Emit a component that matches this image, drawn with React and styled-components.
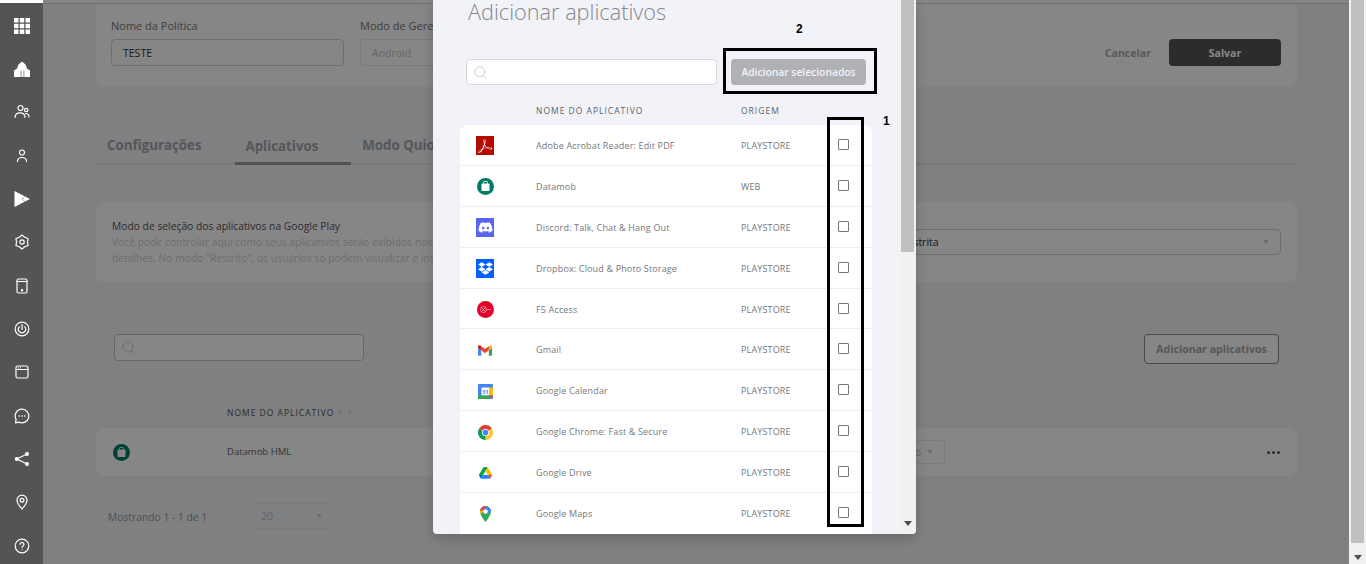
import React from 'react';
import styled, { createGlobalStyle } from 'styled-components';
import { Search, ArrowUp, ArrowDown } from 'lucide-react';
import { FaDiscord, FaDropbox } from 'react-icons/fa';
import { SiAdobeacrobatreader } from 'react-icons/si';

const GlobalStyle = createGlobalStyle`
  html, body {
    margin: 0;
    height: 100%;
    overflow: hidden;
    background: #f1f3f8;
    font-family: 'Open Sans', 'Liberation Sans', sans-serif;
  }
  * {
    box-sizing: border-box;
  }
`;

const Page = styled.div`
  display: flex;
  width: 1366px;
  height: 564px;
  overflow: hidden;
`;

const Sidebar = styled.nav`
  flex: 0 0 43px;
  display: flex;
  flex-direction: column;
  background: #545454;
  border-top: 3px solid #fff;
`;

const SideItem = styled.div`
  flex: 0 0 43.33px;
  display: flex;
  align-items: center;
  justify-content: center;
  color: #fff;
  &:first-child {
    margin-top: 1px;
  }
`;

const Main = styled.main`
  position: relative;
  flex: 1;
  min-width: 0;
  display: flex;
  flex-direction: column;
  overflow: hidden;
  background: #f1f3f8;
`;

const TopBar = styled.div`
  flex: 0 0 4px;
  background: #fff;
  border-bottom: 1px solid #d2d2d2;
`;

const Content = styled.div`
  display: flex;
  flex-direction: column;
  padding: 0 52px 0 53px;
`;

const Card = styled.section`
  display: flex;
  background: #fff;
  border-radius: ${(p) => (p.$flatTop ? '0 0 8px 8px' : '8px')};
`;

const PolicyCard = styled(Card)`
  align-items: flex-end;
  padding: 14px 16px 21px 15px;
`;

const Field = styled.label`
  display: flex;
  flex-direction: column;
  gap: 5px;
  width: ${(p) => p.$width}px;
  margin-right: 16px;
  font-size: 11px;
  line-height: 16px;
  color: #777;
`;

const Input = styled.div`
  height: 27px;
  display: flex;
  align-items: center;
  padding: 0 11px;
  border: 1px solid ${(p) => (p.$disabled ? '#e8e8e8' : '#d4d4d4')};
  border-radius: 4px;
  background: #fff;
  font-size: 10.5px;
  color: ${(p) => (p.$disabled ? '#c4c4c4' : '#333')};
`;

const Actions = styled.div`
  margin-left: auto;
  display: flex;
  align-items: center;
  gap: 18px;
`;

const CancelButton = styled.button`
  border: 0;
  padding: 0;
  background: none;
  font: 700 10.6px 'Open Sans', sans-serif;
  color: #aaa;
`;

const SaveButton = styled.button`
  width: 112px;
  height: 27px;
  border: 0;
  border-radius: 4px;
  background: #555;
  font: 700 10.5px 'Open Sans', sans-serif;
  color: #fff;
`;

const Tabs = styled.div`
  display: flex;
  margin-top: 47px;
  border-bottom: 2px solid #e6e7ea;
`;

const Tab = styled.div`
  padding: ${(p) => (p.$active ? '2px 33px 6px 11px' : '1px 33px 8px 11px')};
  margin-bottom: ${(p) => (p.$active ? '-2px' : '0')};
  border-bottom: ${(p) => (p.$active ? '3px solid #9c9c9c' : '0')};
  font-size: 13.3px;
  font-weight: 700;
  line-height: 20px;
  color: #a4a4a8;
  white-space: nowrap;
`;

const ModeCard = styled(Card)`
  height: 80px;
  margin-top: 37px;
  padding: 16px 16px 0;
  align-items: flex-start;
`;

const ModeText = styled.div`
  width: 778px;
  font-size: 10.3px;
  line-height: 16px;
  white-space: nowrap;
  overflow: hidden;
  color: #d2d2d2;
  strong {
    display: block;
    font-weight: 400;
    color: #555;
  }
`;

const Select = styled.div`
  display: flex;
  align-items: center;
  justify-content: ${(p) => (p.$end ? 'flex-end' : 'space-between')};
  gap: 6px;
  flex: ${(p) => (p.$grow ? '1' : `0 0 ${p.$width}px`)};
  height: ${(p) => p.$height || 26}px;
  margin-top: ${(p) => p.$top || 0}px;
  padding: 0 11px 0 10px;
  border: 1px solid ${(p) => p.$line || '#e8e8e8'};
  border-radius: 4px;
  font-size: 10.5px;
  color: ${(p) => p.$color || '#c0c0c0'};
`;

const Caret = styled.span`
  width: 0;
  height: 0;
  border-left: 3px solid transparent;
  border-right: 3px solid transparent;
  border-top: 4px solid #d0d0d0;
`;

const SearchRow = styled.div`
  display: flex;
  align-items: flex-start;
  justify-content: space-between;
  margin-top: 52px;
  padding: 0 18px;
`;

const SearchBox = styled.div`
  display: flex;
  align-items: center;
  width: ${(p) => p.$width}px;
  height: ${(p) => p.$height}px;
  padding-left: 6px;
  background: #fff;
  border: 1px solid ${(p) => p.$line};
  border-radius: 4px;
  color: ${(p) => p.$icon};
`;

const OutlineButton = styled.button`
  width: 135px;
  height: 30px;
  padding: 0;
  background: #fff;
  border: 1px solid #8c8c8c;
  border-radius: 4px;
  font: 700 10.6px 'Open Sans', sans-serif;
  color: #a4a4a8;
`;

const TableHead = styled.div`
  display: flex;
  align-items: center;
  gap: 5px;
  height: 16px;
  margin-top: 40px;
  margin-bottom: 8px;
  padding-left: 131px;
  font-size: 8.5px;
  letter-spacing: 1px;
  color: #555;
  svg {
    margin-left: -3px;
    color: #c4c4c4;
  }
`;

const AppRow = styled(Card)`
  display: grid;
  grid-template-columns: 114px 573px 145px 1fr auto;
  align-items: center;
  height: 48px;
  padding: 0 17px;
  font-size: 9.5px;
  color: #666;
`;

const AppName = styled.span`
  margin-bottom: 2px;
`;

const Dots = styled.span`
  display: flex;
  gap: 2px;
  i {
    width: 3px;
    height: 3px;
    border-radius: 50%;
    background: #555;
  }
`;

const Footer = styled.div`
  display: flex;
  align-items: center;
  margin-top: 27px;
  padding-left: 12px;
  font-size: 10.3px;
  color: #999;
`;

const FooterLabel = styled.span`
  width: 142px;
  padding-top: 2px;
`;

const Overlay = styled.div`
  position: absolute;
  inset: 0;
  background: rgba(0, 0, 0, 0.475);
`;

const Modal = styled.div`
  position: absolute;
  top: 0;
  left: 390px;
  display: flex;
  width: 483px;
  height: 534px;
  overflow: hidden;
  background: #f1f3f8;
  border-radius: 0 0 4px 4px;
  box-shadow: 0 4px 12px rgba(0, 0, 0, 0.2);
`;

const ModalBody = styled.div`
  position: relative;
  flex: 1;
  display: flex;
  flex-direction: column;
  padding-left: 27px;
`;

const ModalTitle = styled.h2`
  margin: 0 0 1px 8px;
  font-size: 21.7px;
  font-weight: 300;
  line-height: 23px;
  color: #85878d;
`;

const ModalSearchRow = styled.div`
  display: flex;
  gap: 14px;
  margin: 35px 0 0 6px;
`;

const PrimaryButton = styled.button`
  width: 135px;
  height: 26px;
  padding: 0;
  border: 0;
  border-radius: 4px;
  background: #b0b1b5;
  font: 600 10.3px 'Open Sans', sans-serif;
  color: #f1f3f8;
`;

const ListGrid = styled.div`
  display: grid;
  grid-template-columns: 76px 205px 97px 1fr;
  align-items: center;
`;

const ListHead = styled(ListGrid)`
  height: 16px;
  margin-top: 17px;
  margin-bottom: 7px;
  width: 412px;
  font-size: 8.5px;
  letter-spacing: 1px;
  color: #5d5f65;
`;

const List = styled.div`
  width: 412px;
  background: #fff;
  border-radius: 8px 8px 0 0;
`;

const ListRow = styled(ListGrid)`
  height: 40.9px;
  padding-top: 2px;
  border-bottom: 1px solid #eceef2;
  font-size: 9px;
  letter-spacing: 0.15px;
  color: #75777c;
  &:last-child {
    border-bottom: 0;
  }
`;

const RowText = styled.span`
  margin-bottom: 1px;
`;

const IconCell = styled.span`
  display: flex;
  align-items: center;
  justify-content: center;
  width: 18px;
  margin-left: 16px;
`;

const SquareIcon = styled.span`
  display: flex;
  align-items: center;
  justify-content: center;
  width: 18px;
  height: ${(p) => p.$height || 19}px;
  background: ${(p) => p.$bg};
  color: #fff;
`;

const Checkbox = styled.input.attrs({ type: 'checkbox' })`
  appearance: none;
  width: 11px;
  height: 11px;
  margin: 0 0 3px;
  background: #fff;
  border: 1px solid #767676;
  border-radius: 1px;
`;

const Highlight = styled.div`
  position: absolute;
  top: ${(p) => p.$top}px;
  left: ${(p) => p.$left}px;
  width: ${(p) => p.$width}px;
  height: ${(p) => p.$height}px;
  border: 3px solid #000;
`;

const Marker = styled.span`
  position: absolute;
  top: ${(p) => p.$top}px;
  left: ${(p) => p.$left}px;
  font: 700 12px/14px 'Liberation Sans', sans-serif;
  color: #000;
`;

const Scrollbar = styled.div`
  flex: 0 0 17px;
  display: flex;
  flex-direction: column;
  align-items: center;
  background: #f1f1f1;
`;

const Thumb = styled.div`
  width: 13px;
  height: ${(p) => p.$height}px;
  background: #c0c0c0;
`;

const ScrollArrow = styled.span`
  width: 0;
  height: 0;
  margin-top: auto;
  margin-bottom: ${(p) => p.$bottom}px;
  border-left: 4px solid transparent;
  border-right: 4px solid transparent;
  border-top: 5px solid #505050;
`;

const Stroke = ({ children, box = 16 }) => (
  <svg
    width={box}
    height={box}
    viewBox={`0 0 ${box} ${box}`}
    fill="none"
    stroke="currentColor"
    strokeWidth="1.2"
    strokeLinecap="round"
    strokeLinejoin="round"
  >
    {children}
  </svg>
);

const sideIcons = [
  <svg key="grid" width="16" height="16" viewBox="0 0 16 16" fill="#fff">
    {[0, 5.75, 11.5].map((y) =>
      [0, 5.75, 11.5].map((x) => <rect key={`${x}-${y}`} x={x} y={y} width="4.5" height="4.5" />),
    )}
  </svg>,
  <svg key="home" width="16" height="16" viewBox="0 0 16 16">
    <path d="M0 16V9.500L3 7.500L4.500 3.500L8 0.500L11.500 3.500L13 7.500L16 9.500V16z" fill="#fff" />
    <path d="M6.500 9.500h1.200V16H6.500zM9.300 9.500h1.200V16H9.300z" fill="#a8a8a8" />
  </svg>,
  <Stroke key="users">
    <circle cx="6.500" cy="4" r="2.500" />
    <circle cx="12.200" cy="6" r="1.700" />
    <path d="M1 13.500C1 10.500 3 8.800 6 8.800s5 1.700 5 4.700M11.500 9.500c2 0 3.500 1.300 3.500 3.500" />
  </Stroke>,
  <Stroke key="user">
    <circle cx="8" cy="4.500" r="2.500" />
    <path d="M3.500 13.500C3.500 11 5.500 9.500 8 9.500s4.500 1.500 4.500 4" />
  </Stroke>,
  <svg key="play" width="16" height="16" viewBox="0 0 16 16">
    <path d="M0.500 0L16 8 0.500 16z" fill="#fff" />
    <path d="M8 8L11.500 5M8 8L11.500 11" stroke="#8a8a8a" strokeWidth="0.8" />
  </svg>,
  <Stroke key="settings">
    <path d="M8 1L10.750 3.240L14.060 4.500L13.500 8L14.060 11.500L10.750 12.760L8 15L5.250 12.760L1.940 11.500L2.500 8L1.940 4.500L5.250 3.240z" />
    <circle cx="8" cy="8" r="2.200" />
  </Stroke>,
  <Stroke key="tablet">
    <rect x="3" y="1" width="10" height="14" rx="1.500" />
    <path d="M3 3.500h10" />
    <circle cx="8" cy="12.200" r="0.600" fill="#fff" />
  </Stroke>,
  <Stroke key="radial">
    <circle cx="8" cy="8" r="6.800" />
    <path d="M5.300 5.800a3.600 3.600 0 1 0 5.400 0M8 3.500V8.500" />
  </Stroke>,
  <Stroke key="window">
    <rect x="2" y="2" width="12" height="12" rx="1.800" />
    <path d="M2 5.500h12M4.500 3.800h0M6.500 3.800h0" />
  </Stroke>,
  <Stroke key="chat">
    <path d="M8 1.200a6.800 6.800 0 1 1-3 12.900L1.500 14.800l.6-3.400A6.800 6.800 0 0 1 8 1.200z" />
    <path d="M5.200 8h.1M8 8h.1M10.800 8h.1" strokeWidth="1.600" />
  </Stroke>,
  <Stroke key="share">
    <circle cx="2.800" cy="8" r="1.400" fill="#fff" />
    <circle cx="13" cy="3" r="1.400" fill="#fff" />
    <circle cx="13" cy="13" r="1.400" fill="#fff" />
    <path d="M4.300 7.200l7.200-3.500M4.300 8.800l7.200 3.500" />
  </Stroke>,
  <Stroke key="pin">
    <path d="M8 15C5.500 12 3 9.500 3 6.200a5 5 0 0 1 10 0C13 9.500 10.500 12 8 15z" />
    <circle cx="8" cy="6.200" r="1.900" />
  </Stroke>,
  <Stroke key="help">
    <circle cx="8" cy="8" r="6.800" />
    <path d="M6.100 6.300a1.900 1.900 0 1 1 2.900 1.700c-.7.400-1 .8-1 1.500M8 11.600h0" />
  </Stroke>,
];

const DatamobIcon = ({ bg }) => (
  <svg width="17" height="17" viewBox="0 0 17 17">
    <circle cx="8.500" cy="8.500" r="8.500" fill={bg} />
    <rect x="4.500" y="5.500" width="8" height="7.500" rx="1" fill="#fff" />
    <path d="M6.500 5.500V4.500a1 1 0 0 1 1-1h2a1 1 0 0 1 1 1v1" fill="none" stroke="#fff" />
  </svg>
);

const F5Icon = () => (
  <svg width="17" height="17" viewBox="0 0 17 17">
    <circle cx="8.500" cy="8.500" r="8.500" fill="#e4002b" />
    <g fill="none" stroke="#fff" strokeWidth="0.6" opacity="0.85">
      <circle cx="6.500" cy="8.500" r="3" />
      <path d="M4.500 6.500l4 4M8.500 6.500l-4 4M9.500 8.500h4.500" />
    </g>
  </svg>
);

const GmailIcon = () => (
  <svg width="14" height="11" viewBox="0 0 256 193">
    <path fill="#4285F4" d="M58.182 192.05V93.14L27.507 65.077 0 49.504v125.091c0 9.658 7.825 17.455 17.455 17.455h40.727z" />
    <path fill="#34A853" d="M197.818 192.05h40.727c9.659 0 17.455-7.826 17.455-17.455V49.505l-31.156 17.837-27.026 25.798v98.91z" />
    <path fill="#EA4335" d="M58.182 93.14l-4.174-38.647 4.174-36.989L128 69.868l69.818-52.364 4.669 34.992-4.669 40.644L128 145.504z" />
    <path fill="#FBBC04" d="M197.818 17.504V93.14L256 49.504V26.231c0-21.585-24.64-33.89-41.89-20.945l-16.292 12.218z" />
    <path fill="#C5221F" d="M0 49.504l26.759 20.07L58.182 93.14V17.504L41.89 5.286C24.61-7.66 0 4.646 0 26.23v23.273z" />
  </svg>
);

const CalendarIcon = () => (
  <svg width="15" height="15" viewBox="0 0 15 15">
    <rect width="15" height="15" rx="1" fill="#4285f4" />
    <rect x="3.500" y="3.500" width="8" height="8" fill="#fff" />
    <rect x="11.500" y="3.500" width="3.500" height="8" fill="#fbbc04" />
    <rect y="11.500" width="11.500" height="3.500" fill="#34a853" />
    <path d="M11.500 11.500H15L11.500 15z" fill="#ea4335" />
    <text x="7.500" y="9.500" fontSize="5.500" fontWeight="700" textAnchor="middle" fill="#4285f4" fontFamily="Open Sans">31</text>
  </svg>
);

const ChromeIcon = () => (
  <svg width="15" height="15" viewBox="0 0 48 48">
    <path d="M24 24L3.200 12A24 24 0 0 1 44.800 12z" fill="#db4437" />
    <path d="M24 24L44.800 12A24 24 0 0 1 24 48z" fill="#fcc934" />
    <path d="M24 24L24 48A24 24 0 0 1 3.200 12z" fill="#0f9d58" />
    <circle cx="24" cy="24" r="11.500" fill="#fff" />
    <circle cx="24" cy="24" r="9" fill="#4285f4" />
  </svg>
);

const DriveIcon = () => (
  <svg width="13" height="12" viewBox="0 0 87.300 78">
    <path fill="#0066da" d="m6.600 66.850 3.850 6.650c.8 1.400 1.950 2.500 3.300 3.300l13.750-23.800h-27.500c0 1.550.4 3.100 1.200 4.500z" />
    <path fill="#00ac47" d="m43.650 25-13.750-23.800c-1.350.8-2.500 1.900-3.300 3.300l-25.400 44a9.060 9.060 0 0 0 -1.200 4.500h27.500z" />
    <path fill="#ea4335" d="m73.550 76.800c1.350-.8 2.500-1.900 3.300-3.300l1.600-2.750 7.650-13.250c.8-1.400 1.200-2.950 1.200-4.500h-27.502l5.852 11.500z" />
    <path fill="#00832d" d="m43.650 25 13.750-23.800c-1.350-.8-2.900-1.200-4.500-1.200h-18.500c-1.600 0-3.150.45-4.500 1.200z" />
    <path fill="#2684fc" d="m59.800 53h-32.300l-13.750 23.800c1.350.8 2.900 1.200 4.500 1.200h50.800c1.600 0 3.150-.45 4.500-1.200z" />
    <path fill="#ffba00" d="m73.400 26.500-12.700-22c-.8-1.400-1.950-2.500-3.300-3.300l-13.750 23.800 16.150 28h27.450c0-1.550-.4-3.100-1.200-4.500z" />
  </svg>
);

const MapsIcon = () => (
  <svg width="11" height="16" viewBox="0 0 22 32">
    <clipPath id="pin-shape">
      <path d="M11 0C5 0 0 5 0 11c0 8 11 21 11 21s11-13 11-21C22 5 17 0 11 0z" />
    </clipPath>
    <g clipPath="url(#pin-shape)">
      <rect width="22" height="32" fill="#34a853" />
      <path d="M0 0h22v14L0 14z" fill="#4285f4" />
      <path d="M0 0h14L0 14z" fill="#ea4335" />
      <path d="M0 9h7L0 20z" fill="#fbbc04" />
      <circle cx="11" cy="11" r="4.500" fill="#fff" />
    </g>
  </svg>
);

const apps = [
  {
    name: 'Adobe Acrobat Reader: Edit PDF',
    source: 'PLAYSTORE',
    icon: (
      <SquareIcon $bg="#b30b00">
        <SiAdobeacrobatreader size={14} />
      </SquareIcon>
    ),
  },
  { name: 'Datamob', source: 'WEB', icon: <DatamobIcon bg="#007a66" /> },
  {
    name: 'Discord: Talk, Chat & Hang Out',
    source: 'PLAYSTORE',
    icon: (
      <SquareIcon $bg="#5865f2">
        <FaDiscord size={15} />
      </SquareIcon>
    ),
  },
  {
    name: 'Dropbox: Cloud & Photo Storage',
    source: 'PLAYSTORE',
    icon: (
      <SquareIcon $bg="#0061ff">
        <FaDropbox size={15} />
      </SquareIcon>
    ),
  },
  { name: 'F5 Access', source: 'PLAYSTORE', icon: <F5Icon /> },
  { name: 'Gmail', source: 'PLAYSTORE', icon: <GmailIcon /> },
  { name: 'Google Calendar', source: 'PLAYSTORE', icon: <CalendarIcon /> },
  { name: 'Google Chrome: Fast & Secure', source: 'PLAYSTORE', icon: <ChromeIcon /> },
  { name: 'Google Drive', source: 'PLAYSTORE', icon: <DriveIcon /> },
  { name: 'Google Maps', source: 'PLAYSTORE', icon: <MapsIcon /> },
];

const App = () => (
  <Page>
    <GlobalStyle />
    <Sidebar>
      {sideIcons.map((icon) => (
        <SideItem key={icon.key}>{icon}</SideItem>
      ))}
    </Sidebar>
    <Main>
      <TopBar />
      <Content>
        <PolicyCard $flatTop>
          <Field $width={233}>
            Nome da Política
            <Input>TESTE</Input>
          </Field>
          <Field $width={233}>
            Modo de Gerenciamento
            <Input $disabled>Android</Input>
          </Field>
          <Actions>
            <CancelButton type="button">Cancelar</CancelButton>
            <SaveButton type="button">Salvar</SaveButton>
          </Actions>
        </PolicyCard>

        <Tabs>
          <Tab>Configurações</Tab>
          <Tab $active>Aplicativos</Tab>
          <Tab>Modo Quiosque</Tab>
        </Tabs>

        <ModeCard>
          <ModeText>
            <strong>Modo de seleção dos aplicativos na Google Play</strong>
            Você pode controlar aqui como seus aplicativos serão exibidos nos dispositivos. Acesse a ajuda para mais
            <br />
            detalhes. No modo "Restrito", os usuários só podem visualizar e instalar os aplicativos aprovados.
          </ModeText>
          <Select $grow $height={26} $top={11} $line="#d4d4d4" $color="#333">
            Restrita
            <Caret />
          </Select>
        </ModeCard>

        <SearchRow>
          <SearchBox $width={250} $height={27} $line="#c4c4c4" $icon="#c8c8c8">
            <Search size={15} strokeWidth={1.5} />
          </SearchBox>
          <OutlineButton type="button">Adicionar aplicativos</OutlineButton>
        </SearchRow>

        <TableHead>
          NOME DO APLICATIVO
          <ArrowUp size={8} />
          <ArrowDown size={8} />
        </TableHead>

        <AppRow>
          <DatamobIcon bg="#007a66" />
          <AppName>Datamob HML</AppName>
          <Select $end $width={145} $height={24}>
            Padrão seguro
            <Caret />
          </Select>
          <span />
          <Dots>
            <i />
            <i />
            <i />
          </Dots>
        </AppRow>

        <Footer>
          <FooterLabel>Mostrando 1 - 1 de 1</FooterLabel>
          <Select $width={84}>
            20
            <Caret />
          </Select>
        </Footer>
      </Content>

      <Overlay />

      <Modal>
        <ModalBody>
          <ModalTitle>Adicionar aplicativos</ModalTitle>
          <ModalSearchRow>
            <SearchBox $width={251} $height={26} $line="#d6d8dd" $icon="#c8cad0">
              <Search size={15} strokeWidth={1.5} />
            </SearchBox>
            <PrimaryButton type="button">Adicionar selecionados</PrimaryButton>
          </ModalSearchRow>
          <ListHead>
            <span />
            <span>NOME DO APLICATIVO</span>
            <span>ORIGEM</span>
          </ListHead>
          <List>
            {apps.map((app) => (
              <ListRow key={app.name}>
                <IconCell>{app.icon}</IconCell>
                <RowText>{app.name}</RowText>
                <RowText>{app.source}</RowText>
                <Checkbox aria-label={app.name} />
              </ListRow>
            ))}
          </List>
          <Highlight $top={48} $left={290} $width={154} $height={46} />
          <Marker $top={22} $left={363}>2</Marker>
          <Highlight $top={117} $left={394} $width={37} $height={410} />
          <Marker $top={114} $left={450}>1</Marker>
        </ModalBody>
        <Scrollbar>
          <Thumb $height={252} />
          <ScrollArrow $bottom={8} />
        </Scrollbar>
      </Modal>
    </Main>
    <Scrollbar>
      <Thumb $height={543} />
      <ScrollArrow $bottom={4} />
    </Scrollbar>
  </Page>
);

export default App;
